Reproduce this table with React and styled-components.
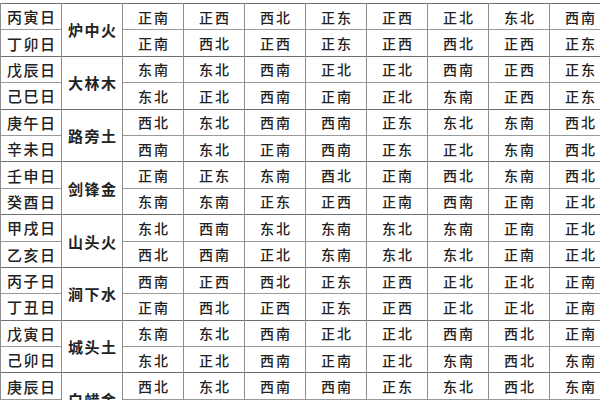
import React from 'react'
import styled, { createGlobalStyle } from 'styled-components'

const GlobalStyle = createGlobalStyle`
	html, body {
		margin: 0;
		padding: 0;
		background: #fff;
		overflow: hidden;
	}
`;

const Page = styled.div`
	width: 600px;
	height: 400px;
	overflow: hidden;
	padding-top: 3px;
	box-sizing: border-box;
	background: #fff;
	font-family: "Noto Sans CJK SC", "Noto Sans", sans-serif;
	color: #222;
`;

const Table = styled.table`
	border-collapse: collapse;
	table-layout: fixed;
	width: 601px;
`;

const Row = styled.tr`
	height: 26.4px;
	border-top: 1px solid ${props => (props.$groupStart ? '#6f6f6f' : '#9a9a9a')};
`;

const Cell = styled.td`
	width: 60px;
	padding: 0;
	border-left: 1px solid #8e8e8e;
	border-right: 1px solid #8e8e8e;
	text-align: center;
	vertical-align: middle;
	font-size: ${props => (props.$kind === 'direction' ? '14px' : '15px')};
	letter-spacing: ${props => (props.$kind === 'direction' ? '2px' : '1.5px')};
	text-indent: ${props => (props.$kind === 'direction' ? '2px' : '1.5px')};
	font-weight: ${props => (props.$kind === 'element' ? 600 : 500)};
	line-height: 1;
	white-space: nowrap;
`;

const rows = [
	['丙寅日', '炉中火', ['正南', '正西', '西北', '正东', '正西', '正北', '东北', '西南']],
	['丁卯日', null, ['正南', '西北', '正西', '正东', '正西', '西北', '正西', '正东']],
	['戊辰日', '大林木', ['东南', '东北', '西南', '正北', '正北', '西南', '正西', '正东']],
	['己巳日', null, ['东北', '正北', '西南', '正南', '正北', '东南', '正西', '正东']],
	['庚午日', '路旁土', ['西北', '东北', '西南', '西南', '正东', '东北', '东南', '西北']],
	['辛未日', null, ['西南', '东北', '正南', '西南', '正东', '正北', '东南', '西北']],
	['壬申日', '剑锋金', ['正南', '正东', '东南', '酉北', '正南', '西北', '东南', '西北']],
	['癸酉日', null, ['东南', '东南', '正东', '正西', '正南', '西南', '正南', '正北']],
	['甲戌日', '山头火', ['东北', '西南', '东北', '东南', '东北', '东南', '正南', '正北']],
	['乙亥日', null, ['西北', '西南', '正北', '东南', '东北', '东北', '正南', '正北']],
	['丙子日', '涧下水', ['西南', '正西', '西北', '正东', '正西', '正北', '正北', '正南']],
	['丁丑日', null, ['正南', '西北', '正西', '正东', '正西', '正北', '正北', '正南']],
	['戊寅日', '城头土', ['东南', '东北', '西南', '正北', '正北', '西南', '西北', '正南']],
	['己卯日', null, ['东北', '正北', '西南', '正南', '正北', '东南', '西北', '东南']],
	['庚辰日', '白蜡金', ['西北', '东北', '西南', '西南', '正东', '东北', '西北', '东南']],
	['辛巳日', null, ['西南', '东北', '正南', '西南', '正东', '正北', '西北', '东南']],
];

export default function App() {
	return (
		<>
			<GlobalStyle />
			<Page>
				<Table>
					<tbody>
						{rows.map(([day, element, dirs], i) => (
							<Row key={day + i} $groupStart={i % 2 === 0}>
								<Cell $kind="day">{day}</Cell>
								{element && <Cell $kind="element" rowSpan={2}>{element}</Cell>}
								{dirs.map((d, j) => (
									<Cell key={j} $kind="direction">{d}</Cell>
								))}
							</Row>
						))}
					</tbody>
				</Table>
			</Page>
		</>
	)
}
